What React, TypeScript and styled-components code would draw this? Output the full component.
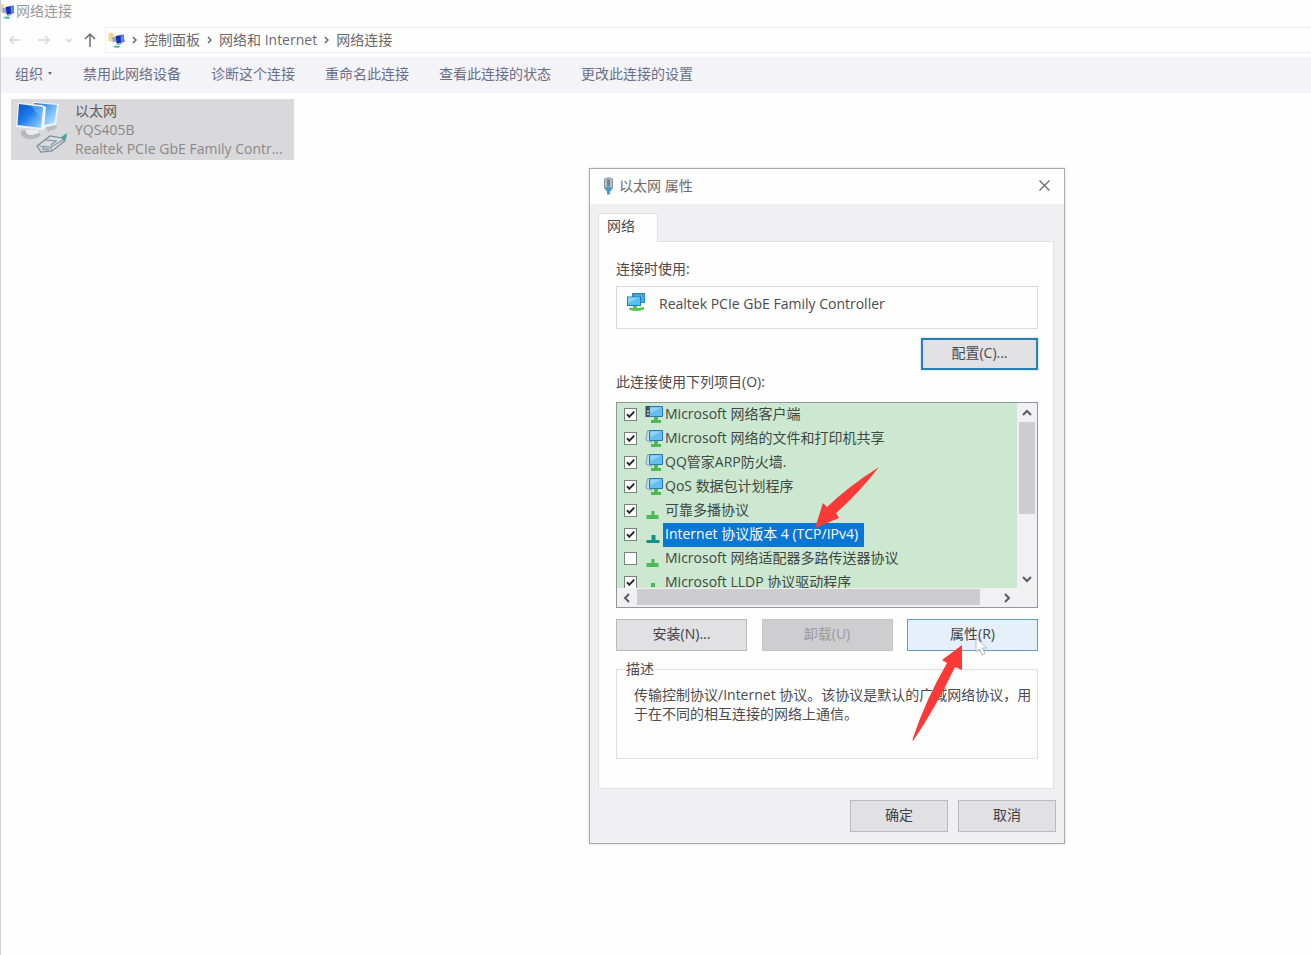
import React from "react";
import styled, { createGlobalStyle, css } from "styled-components";

const GlobalStyle = createGlobalStyle`
  *, *::before, *::after { box-sizing: border-box; }
  html, body { margin: 0; height: 100%; background: #fefefe; }
  #root { min-height: 100%; display: flex; }
  body, button, input {
    font-family: "Open Sans", "Noto Sans CJK SC", sans-serif;
    font-size: 14px;
    line-height: 20px;
  }
  button { cursor: default; }
  svg { display: block; flex: none; }
`;

const Window = styled.div`
  position: relative;
  flex: 1;
  min-height: 100vh;
  border-left: 1px solid #cfced2;
  background: #fefefe;
  overflow: hidden;
`;

const TitleBar = styled.header`
  display: flex;
  align-items: center;
  gap: 2px;
  height: 22px;
  color: #9a999c;
`;

const WindowTitle = styled.h1`
  margin: 0;
  font-size: 14px;
  font-weight: 400;
`;

const NavRow = styled.nav`
  display: flex;
  align-items: center;
  height: 35px;
  padding: 5px 0 4px 4px;
`;

const NavButton = styled.button<{ $width: number; $active?: boolean }>`
  display: flex;
  justify-content: center;
  width: ${(p) => p.$width}px;
  padding: 0;
  border: 0;
  background: none;
  color: ${(p) => (p.$active ? "#6c6b6e" : "#d6d5d8")};
`;

const AddressBar = styled.div`
  display: flex;
  align-items: center;
  flex: 1;
  height: 26px;
  padding-left: 2px;
  border: 1px solid #efeef1;
  border-right: 0;
  color: #6b6a6d;
`;

const Crumbs = styled.ol`
  display: flex;
  margin: 0;
  padding: 0;
  list-style: none;
`;

const Crumb = styled.li`
  display: flex;
  align-items: center;
`;

const CrumbArrow = styled.svg`
  margin: 0 7px;
`;

const CrumbLink = styled.a`
  color: inherit;
  text-decoration: none;
`;

const CommandBar = styled.div`
  display: flex;
  align-items: center;
  gap: 30px;
  height: 36px;
  padding: 0 0 2px 14px;
  background: #f4f3f8;
`;

const Command = styled.button`
  display: flex;
  align-items: center;
  gap: 4px;
  padding: 0;
  border: 0;
  background: none;
  color: #6b6e87;
`;

const Content = styled.main`
  padding: 6px 10px;
`;

const Connection = styled.div`
  display: flex;
  gap: 8px;
  width: 283px;
  height: 61px;
  padding: 2px 3px;
  background: #d9d8da;
`;

const ConnectionText = styled.div`
  min-width: 0;
`;

const ConnectionLine = styled.p<{ $strong?: boolean }>`
  margin: 0;
  line-height: 19px;
  color: ${(p) => (p.$strong ? "#5c5b5e" : "#89888b")};
  white-space: nowrap;
`;

const Dialog = styled.section`
  position: absolute;
  top: 168px;
  left: 588px;
  width: 476px;
  border: 1px solid #a9a8ab;
  background: #f0eff1;
  box-shadow: 0 0 3px rgba(0, 0, 0, 0.14);
  color: #4c4b4e;
`;

const DialogTitleBar = styled.div`
  display: flex;
  align-items: center;
  gap: 5px;
  height: 35px;
  padding: 0 13px 2px 13px;
  background: #fefefe;
`;

const DialogTitle = styled.h2`
  flex: 1;
  margin: 0;
  font-size: 14px;
  font-weight: 400;
  color: #6b6a6d;
`;

const CloseButton = styled.button`
  padding: 0;
  border: 0;
  background: none;
  color: #68676a;
`;

const DialogBody = styled.div`
  padding: 9px 10px 0 8px;
`;

const Tab = styled.button`
  display: block;
  position: relative;
  width: 60px;
  height: 29px;
  margin-bottom: -1px;
  padding: 0 0 4px 8px;
  border: 1px solid #e2e1e3;
  border-bottom: 0;
  background: #fefefe;
  color: #4c4b4e;
  text-align: left;
`;

const TabPanel = styled.div`
  padding: 17px 15px 29px 17px;
  border: 1px solid #e2e1e3;
  background: #fefefe;
`;

const Label = styled.p`
  margin: 0;
`;

const ListLabel = styled(Label)`
  margin-top: 2px;
`;

const Adapter = styled.div`
  display: flex;
  gap: 13px;
  height: 43px;
  margin: 7px 0 9px;
  padding: 6px 9px;
  line-height: 22px;
  border: 1px solid #dad9db;
`;

const buttonLooks = {
  plain: css`
    border: 1px solid #bab9bb;
    background: #e1e0e2;
    color: #424144;
  `,
  disabled: css`
    border: 1px solid #c5c4c6;
    background: #cecdcf;
    color: #9b9a9d;
  `,
  focus: css`
    border: 2px solid #2a7fb8;
    background: #e1e0e2;
    color: #4c4b4e;
    box-shadow: 0 0 1px #2a9ad8;
  `,
  hover: css`
    border: 1px solid #5d9ccf;
    background: #e5f0fa;
    color: #424144;
  `,
};

const PushButton = styled.button<{ $look?: keyof typeof buttonLooks; $width: number }>`
  width: ${(p) => p.$width}px;
  height: 32px;
  padding: 0 0 2px;
  ${(p) => buttonLooks[p.$look ?? "plain"]}
`;

const ButtonRow = styled.div<{ $align?: string }>`
  display: flex;
  justify-content: ${(p) => p.$align ?? "flex-end"};
`;

const Footer = styled.footer`
  display: flex;
  justify-content: flex-end;
  gap: 10px;
  padding: 11px 8px 11px 0;
`;

const ListBox = styled.div`
  display: grid;
  grid-template-columns: 1fr 20px;
  grid-template-rows: 185px 19px;
  margin: 10px 0 11px;
  border: 1px solid #8d9a97;
  background: #f1f0f2;
`;

const Items = styled.ul`
  margin: 0;
  padding: 0 0 0 7px;
  overflow: hidden;
  list-style: none;
  background: #cce8d1;
`;

const Item = styled.li`
  height: 24px;
`;

const ItemLabel = styled.label`
  display: flex;
  align-items: center;
  height: 24px;
`;

const CheckBox = styled.input`
  appearance: none;
  width: 13px;
  height: 13px;
  margin: 0 7px 2px 0;
  border: 1px solid #77827a;
  background: #fefefe;
  &:checked {
    background: #fefefe
      url("data:image/svg+xml,%3Csvg xmlns='http://www.w3.org/2000/svg' viewBox='0 0 11 11'%3E%3Cpath d='M2 5.2 4.3 7.8 9.2 2.6' fill='none' stroke='%23222' stroke-width='1.9'/%3E%3C/svg%3E");
  }
`;

const ItemText = styled.span<{ $selected?: boolean }>`
  padding: 0 6px 2px 2px;
  margin-left: -1px;
  line-height: 22px;
  white-space: nowrap;
  color: ${(p) => (p.$selected ? "#ffffff" : "#3f4943")};
  background: ${(p) => (p.$selected ? "#0a76d6" : "transparent")};
`;

const ScrollBar = styled.div<{ $vertical?: boolean }>`
  display: flex;
  flex-direction: ${(p) => (p.$vertical ? "column" : "row")};
  align-items: stretch;
  ${(p) => !p.$vertical && "grid-column: 1;"}
`;

const ScrollButton = styled.button`
  display: flex;
  align-items: center;
  justify-content: center;
  width: 20px;
  height: 19px;
  padding: 0;
  border: 0;
  background: none;
  color: #5b5a5d;
`;

const Thumb = styled.div<{ $length: number; $vertical?: boolean }>`
  flex: 0 0 ${(p) => p.$length}px;
  margin: ${(p) => (p.$vertical ? "0 2px auto" : "1px auto 2px 0")};
  background: #cdccce;
`;

const Group = styled.fieldset`
  height: 100px;
  margin: 8px 0 0;
  padding: 6px 0 0 17px;
  border: 1px solid #dfdee0;
`;

const Legend = styled.legend`
  margin-left: -10px;
  padding: 0 2px;
`;

const Description = styled.p`
  margin: 0;
  line-height: 19px;
`;

const Overlay = styled.svg<{ $x: number; $y: number }>`
  position: absolute;
  left: ${(p) => p.$x}px;
  top: ${(p) => p.$y}px;
  pointer-events: none;
`;

const NetworkFolderIcon = ({ folder = false }: { folder?: boolean }) => (
  <svg width={folder ? 17 : 13} height="17" viewBox={folder ? "0 0 17 17" : "3 0 13 17"} aria-hidden="true">
    <path d="M0.500 1.500 4 0.500 6 2v8l-5.500-1z" fill="#f3d58c" />
    <path d="M4 5.500 9 4.500v6L5 10z" fill="#8ea6dc" />
    <path d="M7.500 4 15.500 2.500l1 7-7.500 2.500z" fill="#1c2fae" />
    <path d="M12.500 3.600 15.500 3l.8 6-3.300 1z" fill="#5f8bea" />
    <path d="M9 12.200 14 10.500l1 1-4.500 1.800z" fill="#aab0bd" />
    <path d="M5 14.500q3-1.800 7.500-.4l-1.500 1.600q-4 .6-6-1.200z" fill="#4fbf86" />
  </svg>
);

const Chevron = ({ d, size = 10 }: { d: string; size?: number }) => (
  <svg width={size} height={size} viewBox="0 0 10 10" fill="none" stroke="currentColor" strokeWidth="2" aria-hidden="true">
    <path d={d} />
  </svg>
);

const ConnectionIcon = () => (
  <svg width="53" height="54" viewBox="0 0 53 54" aria-hidden="true">
    <defs>
      <linearGradient id="screen" x1="0" y1="0" x2="1" y2="1">
        <stop offset="0" stopColor="#0b52c4" />
        <stop offset=".45" stopColor="#1c7cec" />
        <stop offset="1" stopColor="#a9ddff" />
      </linearGradient>
      <linearGradient id="rear" x1="0" y1="0" x2="1" y2="1">
        <stop offset="0" stopColor="#1667d2" />
        <stop offset=".6" stopColor="#7cc0fa" />
        <stop offset="1" stopColor="#c4e8ff" />
      </linearGradient>
    </defs>
    <path d="M19 1 45 3 42 25l-12 2z" fill="#eef3f7" />
    <path d="M20 2 43 4 40.500 22 30 24z" fill="url(#rear)" />
    <path d="M32 26 42 24l1 3-9 4z" fill="#b9bdc1" />
    <path d="M8 29q-4 6 5 9 9 1 14-4l-3-4z" fill="#b7babd" />
    <path d="M12 29q-1 5 6 5l7-2-1-3z" fill="#eceeef" />
    <path d="M4 2 28 4 32 6 30 29 2 26z" fill="#f0f4f6" />
    <path d="M5 3 29 6 27 27 3.500 24z" fill="url(#screen)" />
    <path d="M17 4.600 29 6 28 19z" fill="#8fcafb" opacity=".45" />
    <path d="M46 37 53 32 52 38 46 42z" fill="#3ca99f" />
    <path d="M23 45 36 35 48 37 51 40 38 50 27 51z" fill="#d7dde1" stroke="#7d8b98" strokeWidth="1.200" />
    <path d="m25 45 12 1 12-7M37 46v4M31 39l11 1-5 4" fill="none" stroke="#8694a0" strokeWidth="1.200" />
    <path d="m28 46 7 1v3l-7-1z" fill="#9ba7b1" />
  </svg>
);

const PlugIcon = () => (
  <svg width="11" height="18" viewBox="0 0 11 18" aria-hidden="true">
    <path d="M1.500 2Q5.500-.5 9.500 2v9L8 13H3l-1.500-2z" fill="#b4bec7" stroke="#8c98a3" />
    <path d="M4 2.500h3v7H4z" fill="#6f8597" />
    <path d="M2.500 10h6v3L7 14.500v3H4v-3L2.500 13z" fill="#4c9bcd" />
  </svg>
);

const AdapterIcon = () => (
  <svg width="20" height="19" viewBox="0 0 20 19" aria-hidden="true">
    <path d="M6 0h13v10H6z" fill="#2f86bd" />
    <path d="M7.500 1.500H18V9H7.500z" fill="#49aee6" />
    <path d="M1 3.500h14v9.500H1z" fill="#237bb7" />
    <path d="M2 4.500h12v7.500H2z" fill="#55c0f3" />
    <path d="M2 4.500h12L2 10z" fill="#85d4f8" />
    <path d="M7 13h4v2l7-1v2.500q-8 3-15 0V15l4-.3z" fill="#5cc455" />
  </svg>
);

type Glyph = "client" | "service" | "protocol" | "dot";

const ItemIcon = ({ kind, selected }: { kind: Glyph; selected?: boolean }) => {
  const green = selected ? "#138f86" : "#4db955";
  return (
    <svg width="20" height="20" viewBox="0 0 20 20" aria-hidden="true">
      {kind === "client" && <path d="M1.500 1H8v11H1.500z" fill="#3d4c58" />}
      {kind === "client" && <path d="M3 5.500h2v1.500H3zM3 8.500h2V10H3z" fill="#c8d6df" />}
      {kind === "service" && <path d="M3.500 1.500h9l-5 12L2 11z" fill="#c3dde3" stroke="#7ea7b1" />}
      {(kind === "client" || kind === "service") && (
        <g>
          <path d="M5.500 1.500h13v10h-13z" fill="#66bdf0" stroke="#2879b4" />
          <path d="M6.500 2.500h11l-11 5.500z" fill="#8ed3f8" />
          <path d="M10 12h4v3h3v3H7v-3h3z" fill={green} />
        </g>
      )}
      {kind === "protocol" && !selected && <path d="M7.500 10h3v4h4v4h-12v-4h5z" fill={green} />}
      {kind === "protocol" && selected && <path d="M7.500 10h4v5h4v3h-13v-3h5z" fill={green} />}
      {kind === "dot" && <path d="M7 10h4v4H7z" fill={green} />}
    </svg>
  );
};

const commands = ["禁用此网络设备", "诊断这个连接", "重命名此连接", "查看此连接的状态", "更改此连接的设置"];

const items: { text: string; kind: Glyph; checked: boolean; selected?: boolean }[] = [
  { text: "Microsoft 网络客户端", kind: "client", checked: true },
  { text: "Microsoft 网络的文件和打印机共享", kind: "service", checked: true },
  { text: "QQ管家ARP防火墙.", kind: "service", checked: true },
  { text: "QoS 数据包计划程序", kind: "service", checked: true },
  { text: "可靠多播协议", kind: "protocol", checked: true },
  { text: "Internet 协议版本 4 (TCP/IPv4)", kind: "protocol", checked: true, selected: true },
  { text: "Microsoft 网络适配器多路传送器协议", kind: "protocol", checked: false },
  { text: "Microsoft LLDP 协议驱动程序", kind: "dot", checked: true },
];

export default function App() {
  return (
    <Window>
      <GlobalStyle />
      <TitleBar>
        <NetworkFolderIcon />
        <WindowTitle>网络连接</WindowTitle>
      </TitleBar>

      <NavRow>
        <NavButton $width={20} aria-label="后退" disabled>
          <svg width="14" height="12" viewBox="0 0 14 12" fill="none" stroke="currentColor" strokeWidth="1.500">
            <path d="M13 6H2M6 2 2 6l4 4" />
          </svg>
        </NavButton>
        <NavButton $width={38} aria-label="前进" disabled>
          <svg width="14" height="12" viewBox="0 0 14 12" fill="none" stroke="currentColor" strokeWidth="1.500">
            <path d="M1 6h11M8 2l4 4-4 4" />
          </svg>
        </NavButton>
        <NavButton $width={12} aria-label="最近浏览的位置" disabled>
          <Chevron d="M2 4l3 3 3-3" size={8} />
        </NavButton>
        <NavButton $width={30} $active aria-label="向上">
          <svg width="14" height="16" viewBox="0 0 14 16" fill="none" stroke="currentColor" strokeWidth="1.500">
            <path d="M7 15V2M2 7l5-5 5 5" />
          </svg>
        </NavButton>
        <AddressBar>
          <NetworkFolderIcon folder />
          <Crumbs>
            {["控制面板", "网络和 Internet", "网络连接"].map((name) => (
              <Crumb key={name}>
                <CrumbArrow width="5" height="8" viewBox="0 0 5 8" fill="none" stroke="currentColor" strokeWidth="1.500" aria-hidden="true">
                  <path d="M1 1l3 3-3 3" />
                </CrumbArrow>
                <CrumbLink href="#">{name}</CrumbLink>
              </Crumb>
            ))}
          </Crumbs>
        </AddressBar>
      </NavRow>

      <CommandBar>
        <Command>
          组织
          <svg width="6" height="4" viewBox="0 0 6 4" fill="currentColor" aria-hidden="true">
            <path d="M1 0h4L3 3z" />
          </svg>
        </Command>
        {commands.map((name) => (
          <Command key={name}>{name}</Command>
        ))}
      </CommandBar>

      <Content>
        <Connection>
          <ConnectionIcon />
          <ConnectionText>
            <ConnectionLine $strong>以太网</ConnectionLine>
            <ConnectionLine>YQS405B</ConnectionLine>
            <ConnectionLine>Realtek PCIe GbE Family Contr...</ConnectionLine>
          </ConnectionText>
        </Connection>
      </Content>

      <Dialog role="dialog" aria-labelledby="dialog-title">
        <DialogTitleBar>
          <PlugIcon />
          <DialogTitle id="dialog-title">以太网 属性</DialogTitle>
          <CloseButton aria-label="关闭">
            <svg width="13" height="13" viewBox="0 0 13 13" fill="none" stroke="currentColor" strokeWidth="1.200">
              <path d="M1.500 1.500l10 10M11.500 1.500l-10 10" />
            </svg>
          </CloseButton>
        </DialogTitleBar>

        <DialogBody>
          <Tab role="tab" aria-selected="true">网络</Tab>
          <TabPanel role="tabpanel">
            <Label>连接时使用:</Label>
            <Adapter>
              <AdapterIcon />
              Realtek PCIe GbE Family Controller
            </Adapter>
            <ButtonRow>
              <PushButton $look="focus" $width={117}>配置(C)...</PushButton>
            </ButtonRow>
            <ListLabel id="items-label">此连接使用下列项目(O):</ListLabel>
            <ListBox>
              <Items aria-labelledby="items-label">
                {items.map((item) => (
                  <Item key={item.text}>
                    <ItemLabel>
                      <CheckBox type="checkbox" defaultChecked={item.checked} />
                      <ItemIcon kind={item.kind} selected={item.selected} />
                      <ItemText $selected={item.selected}>{item.text}</ItemText>
                    </ItemLabel>
                  </Item>
                ))}
              </Items>
              <ScrollBar $vertical>
                <ScrollButton aria-label="向上滚动"><Chevron d="M1 7l4-4 4 4" /></ScrollButton>
                <Thumb $vertical $length={92} />
                <ScrollButton aria-label="向下滚动"><Chevron d="M1 3l4 4 4-4" /></ScrollButton>
              </ScrollBar>
              <ScrollBar>
                <ScrollButton aria-label="向左滚动"><Chevron d="M7 1L3 5l4 4" /></ScrollButton>
                <Thumb $length={343} />
                <ScrollButton aria-label="向右滚动"><Chevron d="M3 1l4 4-4 4" /></ScrollButton>
              </ScrollBar>
            </ListBox>
            <ButtonRow $align="space-between">
              <PushButton $width={131}>安装(N)...</PushButton>
              <PushButton $look="disabled" $width={131} disabled>卸载(U)</PushButton>
              <PushButton $look="hover" $width={131}>属性(R)</PushButton>
            </ButtonRow>
            <Group>
              <Legend>描述</Legend>
              <Description>
                传输控制协议/Internet 协议。该协议是默认的广域网络协议，用于在不同的相互连接的网络上通信。
              </Description>
            </Group>
          </TabPanel>
        </DialogBody>

        <Footer>
          <PushButton $width={98}>确定</PushButton>
          <PushButton $width={98}>取消</PushButton>
        </Footer>

        <Overlay $x={385} $y={468} width="14" height="20" viewBox="0 0 14 20" aria-hidden="true">
          <path d="M1 1v14l3.500-3 2.500 6 3-1.200-2.500-5.800H12z" fill="#fff" stroke="#b4b8bf" />
        </Overlay>
        <Overlay $x={223} $y={296} width="68" height="64" viewBox="0 0 68 64" aria-hidden="true">
          <path d="M2 63 10 38 14 42Q36 21 66 2 44 30 23 48L26 53Z" fill="#fb3a37" />
        </Overlay>
        <Overlay $x={320} $y={474} width="56" height="100" viewBox="0 0 56 100" aria-hidden="true">
          <path d="M52 2V27L45 24Q26 64 3 98 2 97 3 95 16 56 37 20L32 17Z" fill="#fb3a37" />
        </Overlay>
      </Dialog>
    </Window>
  );
}
